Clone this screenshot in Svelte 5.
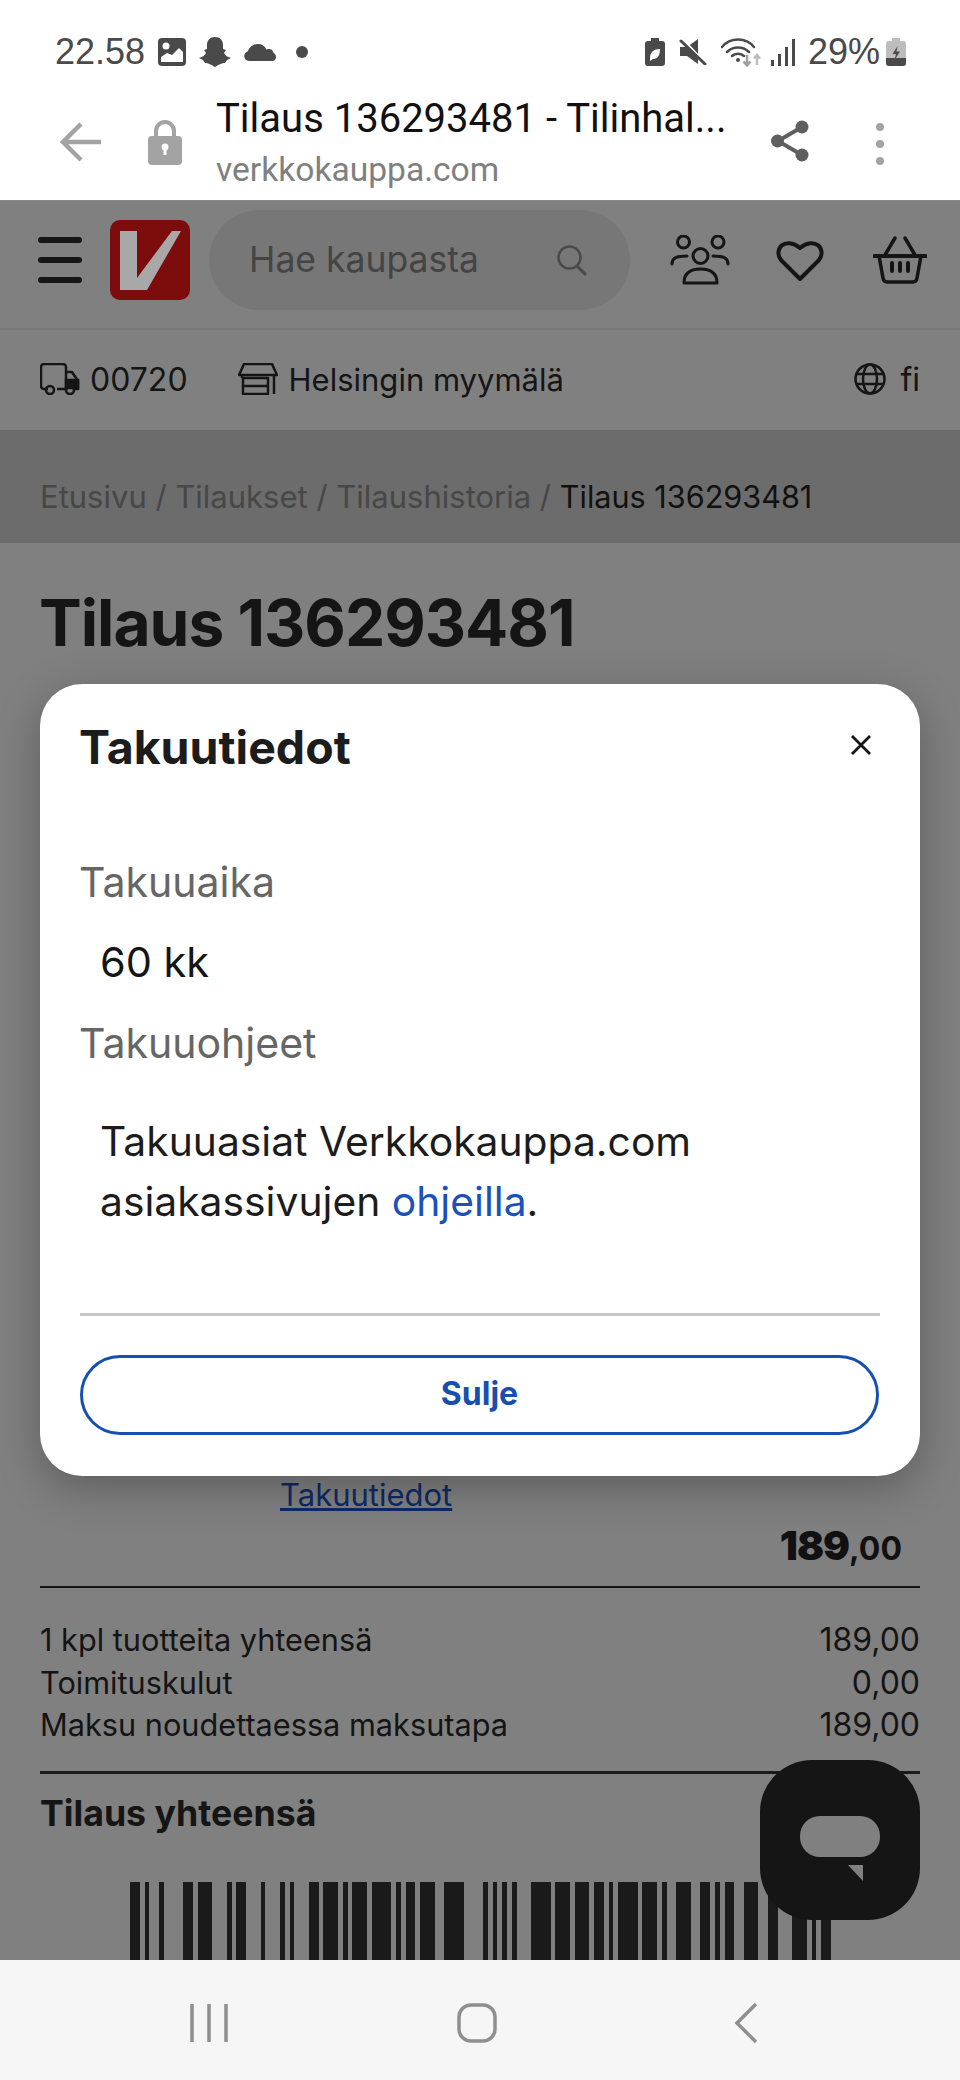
<script>
  // barcode read as [start, width] in modules
  const bars = [
    [0,2],[3,1],[6,1],[11,2],[14,3],[20,1],[22,2],[27,1],[31,1],[33,1],[37,2],[40,3],[44,1],[46,3],[50,4],[55,1],[57,2],[60,3],[65,4],
    [73,1],[75,1],[77,1],[79,1],[83,4],[88,3],[92,3],[96,2],[99,1],[101,4],[106,3],[110,1],[113,3],[118,2],[121,1],[123,2],[127,3],[132,2],[137,3],[141,1],[143,2]
  ];

  const summary = [
    { label: "1 kpl tuotteita yhteensä", value: "189,00" },
    { label: "Toimituskulut", value: "0,00" },
    { label: "Maksu noudettaessa maksutapa", value: "189,00" }
  ];
</script>

<div class="phone">
  <div class="status">
    <div class="status-left">
      <span class="clock">22.58</span>
      <svg width="28" height="28" viewBox="0 0 28 28"><rect x="0" y="0" width="28" height="28" rx="4" fill="#4a4a4a"/><circle cx="8" cy="8" r="3.500" fill="#fff"/><path d="M3 24v-5l6-4 5 2 7-7 4 4v10z" fill="#fff"/></svg>
      <svg width="32" height="31" viewBox="0 0 32 31"><path d="M16 0c5 0 8 3.500 8 8v4l3 1-2 3c1 2 3 4 7 5l-4 2-2 3c-3 0-5 1-10 4-5-3-7-4-10-4l-2-3-4-2c4-1 6-3 7-5l-2-3 3-1V8c0-4.500 3-8 8-8z" fill="#4a4a4a"/></svg>
      <svg width="32" height="17" viewBox="0 0 32 17"><path d="M5 17a5 5 0 0 1-1-9.800C5 3 9 0 14 0c4 0 7 2 8.500 5.500 1-.5 1.500-.5 2.500-.5 3 0 4 2 4.500 4 1.500.5 2.500 2 2.500 4 0 2.500-1.500 4-4 4z" fill="#4a4a4a"/></svg>
      <span class="dot"></span>
    </div>
    <div class="status-right">
      <svg width="20" height="28" viewBox="0 0 20 28"><path d="M6 0h8v3h3a3 3 0 0 1 3 3v19a3 3 0 0 1-3 3H3a3 3 0 0 1-3-3V6a3 3 0 0 1 3-3h3z" fill="#4a4a4a"/><path d="M5 20c0-6 4-9 10-9 0 6-2 10-7 10l-3 2z" fill="#fff"/></svg>
      <svg width="28" height="26" viewBox="0 0 28 26"><path d="M1 8h7l11-8v25L8 17H1z" fill="#4a4a4a"/><path d="M4 0l23 25" stroke="#fff" stroke-width="2"/><path d="M2 2l24 23" stroke="#4a4a4a" stroke-width="3" stroke-linecap="round"/></svg>
      <svg width="41" height="29" viewBox="0 0 41 29" fill="none"><path d="M1 9c8-10 24-10 32 0M6 14c6-6 16-6 22 0M11 18c3-3 9-3 12 0" stroke="#4a4a4a" stroke-width="2.500" stroke-linecap="round"/><circle cx="17" cy="22" r="2" fill="#4a4a4a"/><path d="M26 17v10M22.500 23.500l3.500 4 3.500-4" stroke="#a0a0a0" stroke-width="2.500"/><path d="M36 27V17M33 20.500l3-3.500 3 3.500" stroke="#bdbdbd" stroke-width="2.500"/></svg>
      <svg class="signal" width="25" height="27" viewBox="0 0 25 27"><rect x="0" y="21" width="3" height="6" fill="#4a4a4a"/><rect x="7" y="15" width="3" height="12" fill="#4a4a4a"/><rect x="14" y="8" width="3" height="19" fill="#4a4a4a"/><rect x="21" y="0" width="3" height="27" fill="#4a4a4a"/></svg>
      <span class="percent">29%</span>
      <svg width="20" height="28" viewBox="0 0 20 28"><path d="M6 0h8v3h3a3 3 0 0 1 3 3v19a3 3 0 0 1-3 3H3a3 3 0 0 1-3-3V6a3 3 0 0 1 3-3h3z" fill="#bdbdbd"/><path d="M0 20h20v5a3 3 0 0 1-3 3H3a3 3 0 0 1-3-3z" fill="#4a4a4a"/><path d="M11.500 8l-5 8h3.500l-1.500 6 5.500-8.500H10.500z" fill="#4a4a4a"/></svg>
    </div>
  </div>

  <div class="urlbar">
    <svg class="back" width="42" height="40" viewBox="0 0 42 40" fill="none"><path d="M41 20H3M21 2L3 20l18 18" stroke="#a3a3a3" stroke-width="4.500"/></svg>
    <svg class="lock" width="34" height="47" viewBox="0 0 34 47"><path d="M8 22v-9a9 9 0 0 1 18 0v9" fill="none" stroke="#a3a3a3" stroke-width="4"/><rect x="0" y="18" width="34" height="29" rx="4" fill="#a3a3a3"/><circle cx="17" cy="29" r="3.500" fill="#fff"/><rect x="15.500" y="29" width="3" height="8" fill="#fff"/></svg>
    <div class="url-text">
      <div class="url-title">Tilaus 136293481 - Tilinhal...</div>
      <div class="url-host">verkkokauppa.com</div>
    </div>
    <svg class="share" width="38" height="42" viewBox="0 0 38 42" fill="none"><path d="M31 7L7 21l24 14" stroke="#5f5f5f" stroke-width="4"/><circle cx="31" cy="7" r="6.500" fill="#5f5f5f"/><circle cx="6.500" cy="21" r="6.500" fill="#5f5f5f"/><circle cx="31" cy="35" r="6.500" fill="#5f5f5f"/></svg>
    <div class="dots"><span></span><span></span><span></span></div>
  </div>

  <div class="page">
    <header class="head">
      <div class="burger"><span></span><span></span><span></span></div>
      <svg class="logo" width="80" height="80" viewBox="0 0 80 80"><rect width="80" height="80" rx="10" fill="#7d0c0c"/><path d="M10 11h17v47L62 11h9L37 70H10z" fill="#a8a8a8"/></svg>
      <div class="search">
        <span>Hae kaupasta</span>
        <svg width="32" height="32" viewBox="0 0 32 32" fill="none"><circle cx="13.500" cy="13.500" r="11" stroke="#4a4a4a" stroke-width="2.500"/><path d="M21 22l9 9" stroke="#4a4a4a" stroke-width="3"/></svg>
      </div>
      <svg class="people" width="60" height="50" viewBox="0 0 60 50" fill="none" stroke="#151515" stroke-width="3"><circle cx="13.500" cy="7" r="6"/><circle cx="48" cy="7" r="6"/><circle cx="30.500" cy="21" r="7.500"/><path d="M2 29c0-6 4-8 15-8M58 29c0-6-4-8-15-8" stroke-linecap="round"/><path d="M14 48c0-10 6-14 16.500-14S47 38 47 48z" stroke-linejoin="round"/></svg>
      <svg class="heart" width="48" height="42" viewBox="0 0 48 42" fill="none"><path d="M24 40L5 21C-3 10 9-3 24 9c15-12 27 1 19 12z" stroke="#151515" stroke-width="4" stroke-linejoin="round"/></svg>
      <svg class="basket" width="54" height="48" viewBox="0 0 54 48" fill="none" stroke="#151515"><path d="M22 2L12 19M32 2l10 17" stroke-width="3.500" stroke-linecap="round"/><path d="M1 20h52" stroke-width="4" stroke-linecap="round"/><path d="M6 20l4 22c.5 3 2 4 4 4h26c2 0 3.500-1 4-4l4-22" stroke-width="3.500"/><path d="M19 27v8M27 27v8M35 27v8" stroke-width="4" stroke-linecap="round"/></svg>
    </header>

    <div class="location">
      <svg width="40" height="32" viewBox="0 0 40 32" fill="none" stroke="#151515" stroke-width="2.500"><path d="M8 26H4a3 3 0 0 1-3-3V4a3 3 0 0 1 3-3h19a3 3 0 0 1 3 3v22H17"/><path d="M26 9h6l6 9v8h-3" stroke-linejoin="round"/><path d="M26 17h12v8H26z" fill="#151515"/><circle cx="10" cy="27" r="4"/><circle cx="30" cy="27" r="4"/></svg>
      <span class="zip">00720</span>
      <svg class="store" width="40" height="32" viewBox="0 0 40 32" fill="none" stroke="#151515" stroke-width="2.500" stroke-linejoin="round"><path d="M6 1h28l5 11H1z"/><path d="M4 12v3M36 12v19"/><path d="M5 15h25v16H5zM5 23h25"/></svg>
      <span class="shop">Helsingin myymälä</span>
      <svg class="globe" width="32" height="32" viewBox="0 0 32 32" fill="none" stroke="#151515" stroke-width="2.500"><circle cx="16" cy="16" r="14.500"/><ellipse cx="16" cy="16" rx="7" ry="14.500"/><path d="M2 11h28M2 21h28"/></svg>
      <span class="lang">fi</span>
    </div>

    <nav class="crumbs">
      <div>Etusivu / Tilaukset / Tilaushistoria / <b>Tilaus 136293481</b></div>
    </nav>

    <h1>Tilaus 136293481</h1>

    <div class="order">
      <a class="warranty" href="#takuu">Takuutiedot</a>
      <div class="price"><b>189</b><small>,00</small></div>
    </div>

    <div class="summary">
      {#each summary as row}
        <div class="sum-row"><span class="sum-label">{row.label}</span><span>{row.value}</span></div>
      {/each}
    </div>

    <div class="total">Tilaus yhteensä</div>

    <svg class="barcode" width="701" height="78" viewBox="0 0 145 78" preserveAspectRatio="none" shape-rendering="crispEdges">
      {#each bars as bar}
        <rect x={bar[0]} y="0" width={bar[1]} height="78" fill="#1a1a1a"/>
      {/each}
    </svg>

    <button class="chat" aria-label="Chat">
      <svg width="80" height="66" viewBox="0 0 80 66"><rect x="0" y="0" width="80" height="41" rx="20" fill="#808080"/><path d="M48 49h15v16z" fill="#808080"/></svg>
    </button>

    <div class="modal">
      <div class="modal-head">
        <h2>Takuutiedot</h2>
        <svg width="22" height="22" viewBox="0 0 22 22"><path d="M2 2l18 18M20 2L2 20" stroke="#151515" stroke-width="2.800"/></svg>
      </div>
      <div class="label first">Takuuaika</div>
      <div class="value">60 kk</div>
      <div class="label">Takuuohjeet</div>
      <p>Takuuasiat Verkkokauppa.com asiakassivujen <a href="#ohjeet">ohjeilla</a>.</p>
      <div class="sep"></div>
      <button class="close">Sulje</button>
    </div>
  </div>

  <div class="navbar">
    <svg width="38" height="40" viewBox="0 0 38 40" fill="none" stroke="#8f8f8f" stroke-width="3.500"><path d="M2 1v38M19 1v38M36 1v38"/></svg>
    <svg width="40" height="40" viewBox="0 0 40 40" fill="none"><rect x="2" y="2" width="36" height="36" rx="12" stroke="#8f8f8f" stroke-width="3.500"/></svg>
    <svg width="24" height="42" viewBox="0 0 24 42" fill="none"><path d="M22 2L3 21l19 19" stroke="#8f8f8f" stroke-width="3.500"/></svg>
  </div>
</div>

<style>
  :global(body) {
    margin: 0;
    background: #fff;
  }
  .phone {
    width: 960px;
    height: 2080px;
    display: flex;
    flex-direction: column;
    overflow: hidden;
    font-family: Inter, "Liberation Sans", sans-serif;
    color: #151515;
  }

  /* status bar */
  .status {
    height: 80px;
    padding: 24px 54px 0 55px;
    box-sizing: border-box;
    display: flex;
    justify-content: space-between;
    align-items: flex-start;
    font-family: "Liberation Sans", sans-serif;
    color: #4a4a4a;
    font-size: 36px;
  }
  .status-left, .status-right {
    display: flex;
    align-items: center;
    height: 56px;
  }
  .status-left { gap: 13px; }
  .status-right { gap: 14px; }
  .dot {
    width: 12px;
    height: 12px;
    border-radius: 50%;
    background: #4a4a4a;
    margin-left: 7px;
  }
  .signal { margin-left: -5px; }
  .percent { margin-left: -2px; margin-right: -8px; }

  /* browser bar */
  .urlbar {
    height: 120px;
    display: flex;
    align-items: flex-start;
    position: relative;
  }
  .back { margin: 42px 0 0 60px; }
  .lock { margin: 38px 0 0 46px; }
  .url-text {
    margin-left: 34px;
    width: 555px;
    font-family: Roboto, "Liberation Sans", sans-serif;
  }
  .url-title {
    font-size: 40px;
    line-height: 50px;
    margin-top: 14px;
    color: #111;
    white-space: nowrap;
  }
  .url-host {
    font-size: 33.6px;
    line-height: 40px;
    margin-top: 6px;
    color: #808080;
  }
  .share { margin: 40px 0 0 0; }
  .dots {
    margin: 43px 0 0 67px;
    display: flex;
    flex-direction: column;
    gap: 9px;
  }
  .dots span {
    width: 8px;
    height: 8px;
    border-radius: 50%;
    background: #a3a3a3;
  }

  /* page under the dialog */
  .page {
    flex: 1;
    min-height: 0;
    position: relative;
    overflow: hidden;
    background: #808080;
  }
  .head {
    height: 130px;
    padding-bottom: 10px;
    border-bottom: 2px solid #787878;
    border-top: 1px solid #8a8a8a;
    box-sizing: border-box;
    display: flex;
    align-items: center;
  }
  .burger {
    width: 44px;
    margin-left: 38px;
    display: flex;
    flex-direction: column;
    gap: 14px;
  }
  .burger span {
    height: 6px;
    border-radius: 3px;
    background: #151515;
  }
  .logo { margin-left: 28px; }
  .search {
    width: 421px;
    height: 100px;
    margin-left: 19px;
    padding: 0 42px 0 40px;
    box-sizing: border-box;
    border-radius: 50px;
    background: #777;
    display: flex;
    align-items: center;
    justify-content: space-between;
    font-size: 35.5px;
    color: #444;
  }
  .people { margin-left: 40px; }
  .heart { margin-left: 46px; }
  .basket { margin-left: 49px; }
  .location {
    height: 100px;
    padding-bottom: 2px;
    box-sizing: border-box;
    display: flex;
    align-items: center;
    padding-left: 40px;
    font-size: 32px;
  }
  .zip { margin-left: 10px; }
  .store { margin-left: 50px; }
  .shop { margin-left: 11px; font-size: 31px; }
  .globe { margin-left: auto; }
  .lang { margin: 0 40px 0 14px; }
  .crumbs {
    height: 113px;
    background: #6c6c6c;
    padding: 19px 0 0 40px;
    box-sizing: border-box;
    display: flex;
    align-items: center;
    font-size: 31px;
    color: #474747;
  }
  .crumbs b {
    font-weight: 400;
    font-size: 30.6px;
    color: #111;
  }
  h1 {
    margin: 44px 0 0 39px;
    font-size: 64px;
    line-height: 72px;
    font-weight: 700;
    letter-spacing: -1px;
    color: #151515;
  }
  .order {
    margin: 0 40px;
    padding-top: 816px;
    height: 929px;
    box-sizing: border-box;
    border-bottom: 2px solid #141414;
  }
  .warranty {
    display: block;
    width: fit-content;
    margin-left: 240px;
    font-size: 31px;
    line-height: 40px;
    color: #0e2a66;
    text-decoration: underline;
    text-decoration-thickness: 3px;
  }
  .price {
    text-align: right;
    padding-right: 18px;
    margin-top: 3px;
    line-height: 56px;
    color: #111;
    font-weight: 700;
  }
  .price b { font-size: 40px; letter-spacing: -1px; }
  .price small { font-size: 32px; }
  .summary {
    margin: 31px 40px 0;
    padding-bottom: 24px;
    border-bottom: 3px solid #1a1a1a;
    font-size: 32px;
    line-height: 42.5px;
    color: #141414;
  }
  .sum-row {
    display: flex;
    justify-content: space-between;
  }
  .sum-label { font-size: 30.7px; }
  .total {
    margin: 17px 40px 0;
    font-size: 35.7px;
    line-height: 44px;
    font-weight: 700;
  }
  .barcode {
    display: block;
    margin: 47px 0 0 130px;
  }
  .chat {
    position: absolute;
    left: 760px;
    top: 1560px;
    width: 160px;
    height: 160px;
    border: 0;
    padding: 56px 0 0 40px;
    box-sizing: border-box;
    border-radius: 52px;
    background: #151515;
    display: flex;
    align-items: flex-start;
  }
  .chat svg { display: block; }

  /* dialog */
  .modal {
    position: absolute;
    left: 40px;
    top: 484px;
    width: 880px;
    height: 792px;
    box-sizing: border-box;
    padding: 38px 40px 40px 39px;
    border-radius: 42px;
    background: #fff;
    box-shadow: 0 12px 44px rgba(0, 0, 0, 0.28);
  }
  .modal-head {
    display: flex;
    justify-content: space-between;
    align-items: center;
  }
  .modal-head svg { margin-top: -4px; transform: translateX(-8px); }
  h2 {
    margin: 0;
    font-size: 46.5px;
    line-height: 50px;
    font-weight: 700;
    color: #1c1c1c;
  }
  .label {
    font-size: 41px;
    line-height: 46px;
    color: #666;
    margin-top: 34px;
  }
  .label.first { margin-top: 87px; }
  .value {
    font-size: 41.5px;
    line-height: 48px;
    margin: 33px 0 0 21px;
    color: #151515;
  }
  p {
    margin: 45px 0 0 21px;
    width: 640px;
    font-size: 40.8px;
    line-height: 60px;
    color: #1c1c1c;
  }
  p a {
    color: #1a52b8;
    text-decoration: none;
  }
  .sep {
    height: 3px;
    background: #c8c8c8;
    margin-top: 82px;
    margin-left: 1px;
  }
  .close {
    display: block;
    width: 799px;
    height: 80px;
    margin: 39px 0 0 1px;
    padding-bottom: 4px;
    border: 3px solid #174fb0;
    border-radius: 40px;
    background: #fff;
    font-family: inherit;
    font-size: 32px;
    font-weight: 700;
    color: #174fb0;
  }

  /* android nav */
  .navbar {
    height: 120px;
    padding-top: 5px;
    box-sizing: border-box;
    background: #f6f6f6;
    display: grid;
    grid-template-columns: 190px 38px 229px 40px 237px 24px;
    align-items: center;
  }
  .navbar svg:nth-child(1) { grid-column: 2; }
  .navbar svg:nth-child(2) { grid-column: 4; }
  .navbar svg:nth-child(3) { grid-column: 6; }
</style>
